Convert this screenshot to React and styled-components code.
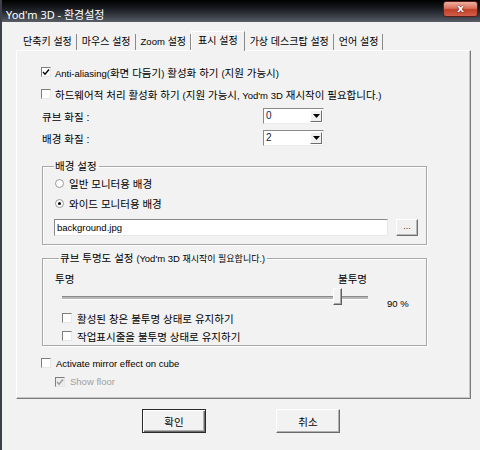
import React from "react";
import styled, { createGlobalStyle } from "styled-components";

const GlobalStyle = createGlobalStyle`
  html, body {
    margin: 0;
    padding: 0;
    background: #f0f0f0;
  }
  body {
    font-family: "Liberation Sans", "Noto Sans CJK KR", sans-serif;
    font-size: 10.5px;
    color: #000;
  }
`;

function Check({ checked, disabled }) {
  return (
    <Box disabled={disabled}>
      {checked && (
        <svg width="8" height="8" viewBox="0 0 8 8">
          <path
            d="M1 4 L3 6.2 L7 1.5"
            fill="none"
            stroke={disabled ? "#9a9a9a" : "#000"}
            strokeWidth="1.4"
          />
        </svg>
      )}
    </Box>
  );
}

function Arrow() {
  return (
    <ComboArrow>
      <svg width="7" height="4" viewBox="0 0 7 4">
        <path d="M0 0 H7 L3.5 4 Z" fill="#000" />
      </svg>
    </ComboArrow>
  );
}

function App() {
  return (
    <>
      <GlobalStyle />
      <Window>
        <TitleBar>
          <Title>Yod'm 3D - 환경설정</Title>
          <CloseBtn>x</CloseBtn>
        </TitleBar>
        <Body>
          <TabRow>
            <Tab>단축키 설정</Tab>
            <Tab>마우스 설정</Tab>
            <Tab>
              <En>Zoom</En> 설정
            </Tab>
            <Tab active>표시 설정</Tab>
            <Tab>가상 데스크탑 설정</Tab>
            <Tab>언어 설정</Tab>
          </TabRow>
          <Panel>
            <CheckRow>
              <Check checked />
              <span>
                <En>Anti-aliasing(</En>화면 다듬기<En>)</En> 활성화 하기 <En>(</En>지원 가능시<En>)</En>
              </span>
            </CheckRow>
            <CheckRow>
              <Check />
              <span>
                하드웨어적 처리 활성화 하기 <En>(</En>지원 가능시<En>, Yod'm 3D</En> 재시작이 필요합니다<En>.)</En>
              </span>
            </CheckRow>
            <FieldRow>
              <FieldLabel>큐브 화질 :</FieldLabel>
              <Combo>
                <ComboValue>0</ComboValue>
                <Arrow />
              </Combo>
            </FieldRow>
            <FieldRow>
              <FieldLabel>배경 화질 :</FieldLabel>
              <Combo>
                <ComboValue>2</ComboValue>
                <Arrow />
              </Combo>
            </FieldRow>

            <Group>
              <Legend>배경 설정</Legend>
              <RadioRow>
                <Radio />
                <span>일반 모니터용 배경</span>
              </RadioRow>
              <RadioRow>
                <Radio selected />
                <span>와이드 모니터용 배경</span>
              </RadioRow>
              <PathRow>
                <TextBox>
                  <En>background.jpg</En>
                </TextBox>
                <SmallBtn>...</SmallBtn>
              </PathRow>
            </Group>

            <Group second>
              <Legend indent>
                큐브 투명도 설정 <Note>(<En>Yod'm 3D</En> 재시작이 필요합니다.)</Note>
              </Legend>
              <Ends>
                <span>투명</span>
                <span>불투명</span>
              </Ends>
              <SliderRow>
                <Track>
                  <Thumb style={{ left: `${0.9 * 306 - 4}px` }} />
                </Track>
                <Percent>90 %</Percent>
              </SliderRow>
              <SubCheckRow>
                <Check />
                <span>활성된 창은 불투명 상태로 유지하기</span>
              </SubCheckRow>
              <SubCheckRow>
                <Check />
                <span>작업표시줄을 불투명 상태로 유지하기</span>
              </SubCheckRow>
            </Group>

            <MirrorRow>
              <Check />
              <En>Activate mirror effect on cube</En>
            </MirrorRow>
            <FloorRow>
              <Check checked disabled />
              <En>Show floor</En>
            </FloorRow>
          </Panel>
          <Buttons>
            <Button primary>확인</Button>
            <Button>취소</Button>
          </Buttons>
        </Body>
      </Window>
    </>
  );
}

export default App;

const Window = styled.div`
  width: 480px;
  height: 450px;
  box-sizing: border-box;
  border-left: 2px solid #3c4048;
  background: #f2f2f2;
  display: flex;
  flex-direction: column;
  overflow: hidden;
`;

const TitleBar = styled.div`
  height: 22px;
  flex: none;
  display: flex;
  align-items: flex-start;
  justify-content: space-between;
  background: linear-gradient(to bottom, #000 0%, #15181c 35%, #3b4048 75%, #585d67 100%);
  margin-left: -2px;
  padding-left: 6px;
`;

const Title = styled.div`
  font-family: "Noto Sans", "Noto Sans CJK KR", sans-serif;
  font-size: 11px;
  color: #fff;
  line-height: 14px;
  margin-top: 8px;
`;

const CloseBtn = styled.div`
  width: 35px;
  height: 16px;
  margin-top: 1px;
  margin-right: 2px;
  box-sizing: border-box;
  border: 1px solid #5a1e16;
  border-radius: 3px;
  background: linear-gradient(to bottom, #eeb0a0 0%, #d8705c 45%, #c23f28 55%, #d0604a 100%);
  color: #fff;
  font-family: "DejaVu Sans", sans-serif;
  font-weight: bold;
  font-size: 11px;
  line-height: 13px;
  text-align: center;
  text-shadow: 0 0 1px #400, 0 0 1px #400;
`;

const Body = styled.div`
  flex: 1;
  padding: 9px 0 0 14px;
`;

const TabRow = styled.div`
  display: flex;
  align-items: flex-end;
  height: 19px;
  padding-left: 2px;
`;

const Tab = styled.div`
  height: 16px;
  line-height: 16px;
  font-size: 10px;
  padding: 0 4px;
  box-sizing: border-box;
  white-space: nowrap;
  border-right: 1px solid #8a8a8a;
  border-left: 1px solid transparent;
  background: #f2f2f2;
  ${(p) =>
    p.active &&
    `
    border-left-color: #fff;
    border-top: 1px solid #fff;
    margin-bottom: -1px;
    height: 20px;
    line-height: 17px;
    padding: 0 6px;
    position: relative;
  `}
`;

const Panel = styled.div`
  width: 455px;
  height: 349px;
  box-sizing: border-box;
  border: 1px solid;
  border-color: #fff #7a7a7a #7a7a7a #fff;
  box-shadow: inset -1px -1px 0 #c8c8c8;
  padding: 10px 0 0 24px;
`;

const En = styled.span`
  font-family: "Liberation Sans", sans-serif;
  font-size: 9.5px;
`;

const Box = styled.span`
  width: 10px;
  height: 10px;
  flex: none;
  box-sizing: border-box;
  border: 1px solid;
  border-color: #7e7e7e #e6e6e6 #e6e6e6 #7e7e7e;
  background: ${(p) => (p.disabled ? "#ececec" : "#fff")};
  display: flex;
  align-items: center;
  justify-content: center;
`;

const CheckRow = styled.div`
  display: flex;
  align-items: center;
  gap: 4px;
  height: 22px;
`;

const FieldRow = styled.div`
  display: flex;
  align-items: center;
  height: 22px;
  padding-left: 1px;
`;

const FieldLabel = styled.span`
  width: 221px;
`;

const Combo = styled.div`
  width: 61px;
  height: 16px;
  box-sizing: border-box;
  border: 1px solid;
  border-color: #8a8a8a #ececec #ececec #8a8a8a;
  background: #fff;
  display: flex;
  align-items: stretch;
  padding: 1px;
`;

const ComboValue = styled.span`
  flex: 1;
  font-family: "Liberation Sans", sans-serif;
  font-size: 10px;
  line-height: 12px;
  color: #141a44;
  padding-left: 1px;
`;

const ComboArrow = styled.span`
  width: 12px;
  box-sizing: border-box;
  border: 1px solid;
  border-color: #fff #6e6e6e #6e6e6e #fff;
  background: #f0f0f0;
  display: flex;
  align-items: center;
  justify-content: center;
`;

const Group = styled.fieldset`
  width: 385px;
  box-sizing: border-box;
  margin: ${(p) => (p.second ? "6px" : "10px")} 0 0 1px;
  padding: 0 0 ${(p) => (p.second ? "0" : "8px")} 11px;
  border: 1px solid #a8a8a8;
  box-shadow: inset 1px 1px 0 #fff, 1px 1px 0 #fff;
  min-width: 0;
`;

const Legend = styled.legend`
  padding: 0 2px 0 1px;
  margin-left: ${(p) => (p.indent ? "5px" : "0")};
  line-height: 14px;
  white-space: nowrap;
`;

const Note = styled.span`
  font-size: 9px;
`;

const RadioRow = styled.div`
  display: flex;
  align-items: center;
  gap: 5px;
  height: 20px;
  padding-left: 1px;
`;

const Radio = styled.span`
  width: 9px;
  height: 9px;
  flex: none;
  box-sizing: border-box;
  border-radius: 50%;
  border: 1px solid #9a9a9a;
  background: #fff;
  display: flex;
  align-items: center;
  justify-content: center;
  &::after {
    content: "";
    width: 3px;
    height: 3px;
    border-radius: 50%;
    background: ${(p) => (p.selected ? "#000" : "transparent")};
  }
`;

const PathRow = styled.div`
  display: flex;
  align-items: center;
  gap: 8px;
  margin-top: 6px;
`;

const TextBox = styled.div`
  width: 334px;
  height: 17px;
  box-sizing: border-box;
  border: 1px solid;
  border-color: #8a8a8a #e8e8e8 #e8e8e8 #8a8a8a;
  background: #fff;
  line-height: 14px;
  padding-left: 2px;
`;

const SmallBtn = styled.div`
  width: 22px;
  height: 17px;
  box-sizing: border-box;
  border: 1px solid;
  border-color: #fff #6e6e6e #6e6e6e #fff;
  box-shadow: inset -1px -1px 0 #b8b8b8;
  background: #f0f0f0;
  font-family: "Liberation Sans", sans-serif;
  font-size: 9px;
  line-height: 13px;
  text-align: center;
  color: #333;
`;

const Ends = styled.div`
  display: flex;
  justify-content: space-between;
  width: 312px;
  height: 16px;
  line-height: 16px;
  margin-top: 5px;
  padding-left: 1px;
`;

const SliderRow = styled.div`
  display: flex;
  align-items: center;
  height: 22px;
  padding-left: 8px;
`;

const Track = styled.div`
  position: relative;
  width: 306px;
  height: 2px;
  border-top: 1px solid #8a8a8a;
  border-bottom: 1px solid #fff;
  background: #b8b8b8;
`;

const Thumb = styled.div`
  position: absolute;
  top: -9px;
  width: 9px;
  height: 17px;
  box-sizing: border-box;
  border: 1px solid;
  border-color: #fff #5e5e5e #5e5e5e #fff;
  box-shadow: inset -1px -1px 0 #a8a8a8;
  background: #f2f2f2;
`;

const Percent = styled.span`
  font-family: "Liberation Sans", sans-serif;
  font-size: 9.5px;
  margin-left: 19px;
  margin-top: 10px;
`;

const SubCheckRow = styled.div`
  display: flex;
  align-items: center;
  gap: 5px;
  height: 18px;
  padding-left: 8px;
  &:first-of-type {
    margin-top: 6px;
  }
`;

const MirrorRow = styled.div`
  display: flex;
  align-items: center;
  gap: 5px;
  height: 18px;
  margin-top: 8px;
`;

const FloorRow = styled.div`
  display: flex;
  align-items: center;
  gap: 5px;
  height: 19px;
  padding-left: 14px;
  color: #a0a0a0;
`;

const Buttons = styled.div`
  display: flex;
  justify-content: center;
  gap: 70px;
  margin: 10px 0 0 -14px;
`;

const Button = styled.div`
  width: 64px;
  height: 24px;
  box-sizing: border-box;
  border: 1px solid;
  border-color: ${(p) => (p.primary ? "#2a2a2a" : "#fff #6a6a6a #6a6a6a #fff")};
  box-shadow: ${(p) =>
    p.primary
      ? "inset 1px 1px 0 #fff, inset -1px -1px 0 #6a6a6a, inset -2px -2px 0 #b0b0b0"
      : "inset -1px -1px 0 #b0b0b0"};
  background: #f2f2f2;
  display: flex;
  align-items: center;
  justify-content: center;
`;
